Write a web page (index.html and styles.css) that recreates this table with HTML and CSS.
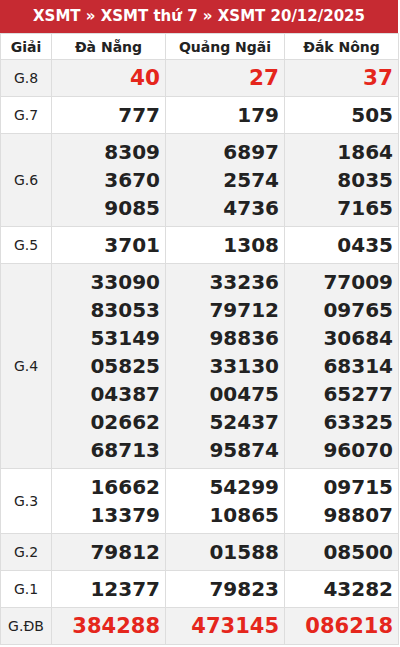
FILE: index.html
```html
<!DOCTYPE html>
<html lang="vi">
<head>
<meta charset="utf-8">
<link rel="stylesheet" href="styles.css">
</head>
<body>
<div class="box">
  <div class="title">XSMT » XSMT thứ 7 » XSMT 20/12/2025</div>
  <table class="kq">
    <colgroup>
      <col class="c0"><col class="c1"><col class="c2"><col class="c3">
    </colgroup>
    <thead>
      <tr><th>Giải</th><th>Đà Nẵng</th><th>Quảng Ngãi</th><th>Đắk Nông</th></tr>
    </thead>
    <tbody>
      <tr class="alt"><td class="g">G.8</td><td class="n red big">40</td><td class="n red big">27</td><td class="n red big">37</td></tr>
      <tr><td class="g">G.7</td><td class="n">777</td><td class="n">179</td><td class="n">505</td></tr>
      <tr class="alt"><td class="g">G.6</td><td class="n">8309<br>3670<br>9085</td><td class="n">6897<br>2574<br>4736</td><td class="n">1864<br>8035<br>7165</td></tr>
      <tr><td class="g">G.5</td><td class="n">3701</td><td class="n">1308</td><td class="n">0435</td></tr>
      <tr class="alt"><td class="g">G.4</td><td class="n">33090<br>83053<br>53149<br>05825<br>04387<br>02662<br>68713</td><td class="n">33236<br>79712<br>98836<br>33130<br>00475<br>52437<br>95874</td><td class="n">77009<br>09765<br>30684<br>68314<br>65277<br>63325<br>96070</td></tr>
      <tr><td class="g">G.3</td><td class="n">16662<br>13379</td><td class="n">54299<br>10865</td><td class="n">09715<br>98807</td></tr>
      <tr class="alt"><td class="g">G.2</td><td class="n">79812</td><td class="n">01588</td><td class="n">08500</td></tr>
      <tr><td class="g">G.1</td><td class="n">12377</td><td class="n">79823</td><td class="n">43282</td></tr>
      <tr class="alt"><td class="g">G.ĐB</td><td class="n red db">384288</td><td class="n red db">473145</td><td class="n red db">086218</td></tr>
    </tbody>
  </table>
</div>
</body>
</html>
```
FILE: styles.css
```css
html, body {
  margin: 0;
  padding: 0;
  background: #fff;
}
body {
  font-family: "DejaVu Sans", sans-serif;
  color: #222;
}
.box {
  width: 398px;
}
.title {
  background: #c62a32;
  color: #fff;
  font-weight: bold;
  font-size: 15px;
  height: 33px;
  line-height: 33px;
  text-align: center;
}
.kq {
  width: 398px;
  border-collapse: collapse;
  table-layout: fixed;
}
.c0 { width: 51px; }
.c1 { width: 114px; }
.c2 { width: 119px; }
.c3 { width: 114px; }
.kq th, .kq td {
  border: 1px solid #ddd;
}
.kq th {
  font-size: 14px;
  font-weight: bold;
  height: 25px;
  padding: 0;
  text-align: center;
  color: #222;
}
.kq td.g {
  font-size: 14px;
  text-align: center;
  padding: 0;
  color: #222;
}
.kq td.n {
  font-size: 20px;
  font-weight: bold;
  line-height: 28px;
  text-align: right;
  padding: 4px 5px 4px 5px;
}
.alt td {
  background: #f2f2f2;
}
.red {
  color: #e5261c;
}
.kq td.big {
  font-size: 21.5px;
}
.kq td.db {
  font-size: 21px;
}
```
